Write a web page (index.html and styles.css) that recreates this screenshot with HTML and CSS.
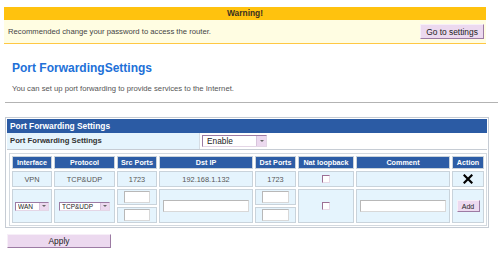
FILE: index.html
```html
<!DOCTYPE html>
<html lang="en">
<head>
    <meta charset="UTF-8">
    <title>Port Forwarding Settings</title>
    <link rel="stylesheet" href="styles.css">
</head>
<body>
    <div class="warning">
        <div class="warning-title">Warning!</div>
        <div class="warning-body">
            <span>Recommended change your password to access the router.</span>
            <button class="btn btn-go">Go to settings</button>
        </div>
    </div>

    <h1 class="title">Port ForwardingSettings</h1>
    <p class="intro">You can set up port forwarding to provide services to the Internet.</p>
    <hr class="divider">

    <div class="panel">
        <div class="panel-head">Port Forwarding Settings</div>
        <div class="panel-row">
            <div class="panel-label">Port Forwarding Settings</div>
            <div class="panel-value">
                <span class="select select-enable">
                    <select><option>Enable</option><option>Disable</option></select>
                    <span class="arrow"></span>
                </span>
            </div>
        </div>
        <div class="panel-body">
            <table class="rules">
                <tr>
                    <th class="c-if">Interface</th>
                    <th class="c-proto">Protocol</th>
                    <th class="c-src">Src Ports</th>
                    <th class="c-ip">Dst IP</th>
                    <th class="c-dst">Dst Ports</th>
                    <th class="c-nat">Nat loopback</th>
                    <th class="c-comment">Comment</th>
                    <th class="c-action">Action</th>
                </tr>
                <tr class="rule">
                    <td>VPN</td>
                    <td>TCP&amp;UDP</td>
                    <td>1723</td>
                    <td>192.168.1.132</td>
                    <td>1723</td>
                    <td><input type="checkbox" class="check"></td>
                    <td></td>
                    <td>
                        <svg class="del" width="10" height="10" viewBox="0 0 10 10">
                            <path d="M1.5 1.5 L8.5 8.5 M8.5 1.5 L1.5 8.5" stroke="#000" stroke-width="2.2" stroke-linecap="square"/>
                        </svg>
                    </td>
                </tr>
                <tr class="new-a">
                    <td rowspan="2">
                        <span class="select select-wan">
                            <select><option>WAN</option></select>
                            <span class="arrow"></span>
                        </span>
                    </td>
                    <td rowspan="2">
                        <span class="select select-proto">
                            <select><option>TCP&amp;UDP</option></select>
                            <span class="arrow"></span>
                        </span>
                    </td>
                    <td><input type="text" class="field field-port"></td>
                    <td rowspan="2"><input type="text" class="field field-wide"></td>
                    <td><input type="text" class="field field-port2"></td>
                    <td rowspan="2"><input type="checkbox" class="check"></td>
                    <td rowspan="2"><input type="text" class="field field-wide"></td>
                    <td rowspan="2"><button class="btn btn-add">Add</button></td>
                </tr>
                <tr class="new-b">
                    <td><input type="text" class="field field-port"></td>
                    <td><input type="text" class="field field-port2"></td>
                </tr>
            </table>
        </div>
    </div>

    <button class="btn btn-apply">Apply</button>
</body>
</html>
```

FILE: styles.css
```css
* {
    margin: 0;
    padding: 0;
    box-sizing: border-box;
    font-family: 'Liberation Sans', Arial, sans-serif;
}

body {
    background: #fff;
    color: #333;
    font-size: 7.7px;
}

.btn {
    background: #ecd9ef;
    border: 1px solid;
    border-color: #f7eff8 #9c7ba3 #9c7ba3 #f7eff8;
    color: #222;
    cursor: pointer;
}

/* warning bar */
.warning {
    margin: 7px 0 0 4px;
    width: 482px;
}

.warning-title {
    background: #ffc20e;
    height: 13px;
    line-height: 13px;
    text-align: center;
    font-weight: bold;
    font-size: 8.4px;
    color: #3a3020;
}

.warning-body {
    background: #fffde2;
    height: 24px;
    border-bottom: 1px solid #ffc843;
    display: flex;
    align-items: center;
    justify-content: space-between;
    padding: 0 2px 0 4px;
    color: #444;
}

.btn-go {
    width: 64px;
    height: 15px;
    font-size: 8.4px;
}

/* heading */
.title {
    margin: 17px 0 0 12px;
    font-size: 12px;
    line-height: 14px;
    color: #2170d8;
}

.intro {
    margin: 9px 0 0 12px;
    line-height: 10px;
    color: #555;
}

.divider {
    margin: 8px 0 0 5px;
    border: none;
    border-top: 1px solid #b3b3b3;
}

/* settings panel */
.panel {
    margin: 14px 0 0 5px;
    width: 484px;
    border: 1px solid #c6ccd4;
    padding: 1px;
}

.panel-head {
    background: #2b5ba4;
    color: #fff;
    font-weight: bold;
    font-size: 8.4px;
    height: 14px;
    line-height: 14px;
    padding-left: 3px;
}

.panel-row {
    display: flex;
    height: 17px;
    border-bottom: 1px solid #c6ccd4;
}

.panel-label {
    width: 193px;
    background: #e5f4fd;
    border-right: 1px solid #d6dde4;
    font-weight: bold;
    line-height: 16px;
    padding-left: 3px;
    color: #333;
}

.panel-value {
    display: flex;
    align-items: center;
    padding-left: 2px;
}

.panel-body {
    padding: 3px 0 0 2px;
}

/* fake select */
.select {
    display: inline-flex;
    background: #fff;
    border: 1px solid;
    border-color: #9c7ba3 #e4d6e6 #e4d6e6 #9c7ba3;
    vertical-align: middle;
}

.select select {
    appearance: none;
    -webkit-appearance: none;
    border: none;
    background: transparent;
    color: #222;
    flex: 1;
    padding-left: 3px;
    outline: none;
}

.select .arrow {
    background: #ecd9ef;
    border-left: 1px solid #d8c4dc;
    display: flex;
    align-items: center;
    justify-content: center;
}

.select .arrow::after {
    content: "";
    border-left: 2px solid transparent;
    border-right: 2px solid transparent;
    border-top: 2px solid #666;
}

.select-enable {
    width: 65px;
    height: 12px;
}

.select-enable select {
    font-size: 8.3px;
    padding-left: 4px;
}

.select-enable .arrow {
    width: 10px;
}

.select-wan,
.select-proto {
    height: 9px;
}

.select-wan {
    width: 34px;
}

.select-proto {
    width: 51px;
}

.select-wan select,
.select-proto select {
    font-size: 6.5px;
    padding-left: 2px;
}

.select-wan .arrow,
.select-proto .arrow {
    width: 9px;
}

/* rules table */
.rules {
    width: 478px;
    table-layout: fixed;
    border: 1px solid #d3d9df;
    border-spacing: 2px;
}

.rules th,
.rules td {
    border: 1px solid #c9d3db;
    text-align: center;
    vertical-align: middle;
    padding: 0;
}

.rules th {
    background: #2d5da6;
    border-color: #c9d3db;
    color: #fff;
    font-weight: bold;
    font-size: 7.2px;
    height: 13px;
}

.rules td {
    background: #e5f4fd;
    color: #555;
    font-size: 7.4px;
}

.rule td {
    height: 16px;
}

.new-a td,
.new-b td {
    height: 16px;
}

.c-if { width: 40px; }
.c-proto { width: 61px; }
.c-src { width: 40px; }
.c-ip { width: 94px; }
.c-dst { width: 41px; }
.c-nat { width: 56px; }
.c-comment { width: 94px; }
.c-action { width: 32px; }

.del {
    display: block;
    margin: 0 auto;
}

.check {
    appearance: none;
    -webkit-appearance: none;
    display: block;
    margin: 0 auto;
    width: 8px;
    height: 8px;
    background: #fff;
    border: 1px solid;
    border-color: #9c6f94 #e8dbe8 #e8dbe8 #9c6f94;
}

.field {
    display: block;
    margin: 0 auto;
    height: 12px;
    background: #fff;
    border: 1px solid;
    border-color: #b8b8b8 #d8d8d8 #d8d8d8 #b8b8b8;
    font-size: 7px;
}

.field-port {
    width: 26px;
}

.field-port2 {
    width: 27px;
}

.field-wide {
    width: 86px;
}

.btn-add {
    width: 23px;
    height: 12px;
    font-size: 7px;
}

.btn-apply {
    display: block;
    margin: 6px 0 0 7px;
    width: 104px;
    height: 14px;
    font-size: 8.4px;
}
```
